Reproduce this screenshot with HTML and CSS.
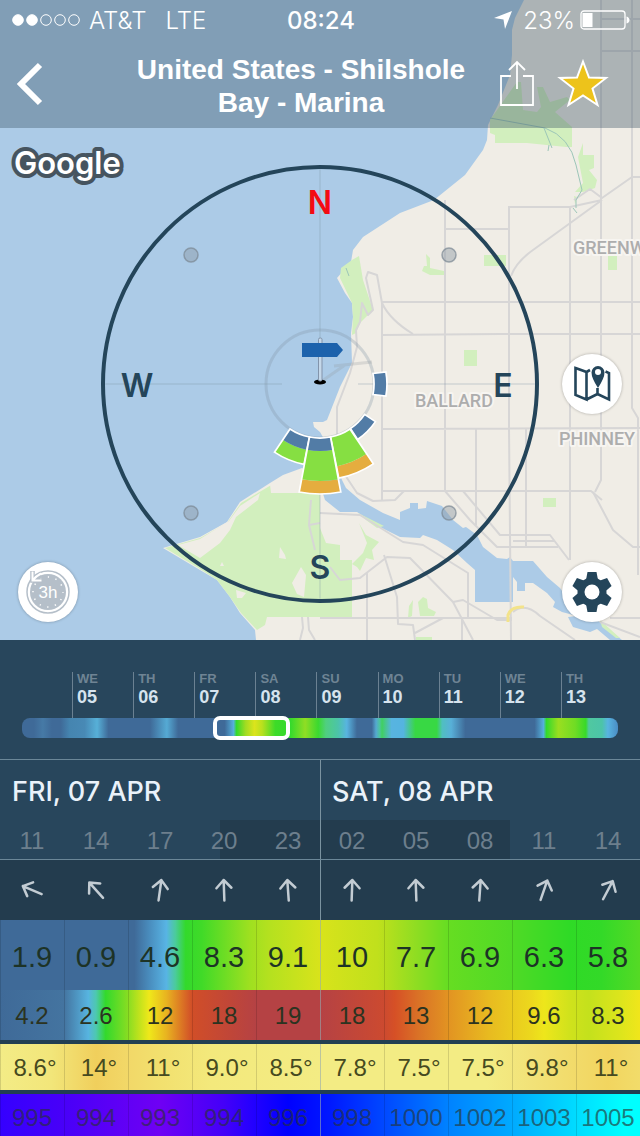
FILE: index.html
```html
<!DOCTYPE html>
<html lang="en">
<head>
<meta charset="utf-8">
<meta name="viewport" content="width=device-width, initial-scale=1">
<title>United States - Shilshole Bay - Marina</title>
<link rel="stylesheet" href="styles.css">
</head>
<body>
<main class="app">
  <section class="map" aria-label="Map">
    <svg class="map-canvas" viewBox="0 0 640 640" preserveAspectRatio="xMidYMid slice">
      <rect class="water" width="640" height="640"/>
      <!-- north shore -->
      <path class="land" d="M524 0L515 18L512 30L512 55L510 75L498 105L488 125L487 140L483 150L465 175L434 200L400 213L363 237L353 250L351 262L337 278L345 293L352 303L353 317L351 333L352 363L340 387L327 420L323 422L313 422L314 427L320 432L333 455L342 480L346 488L360 500L383 513L400 520V512L410 508V503H418V509L426 508L427 501L442 506L453 520L463 528L466 527L477 535L483 547L497 558L507 559L510 557L513 561H533L547 577L560 588L573 607L597 620L622 640H640V0Z"/>
      <!-- south shore -->
      <path class="land" d="M610 640L597 629L590 632L573 627L568 617L577 616L562 612L553 607L555 602L547 593L533 583H525V591H517V582L513 577V602H475V570L467 563L453 550L437 540L423 535L420 538L400 537L380 527L357 512H340L325 500L318 478L302 468L283 475L270 483L240 502L227 522L200 537L163 548L200 570L217 580L230 597L240 613L255 630L256 640Z"/>
      <path class="park" d="M165 548L200 538L227 523L241 503L273 484L271 493H320V528L326 543L340 545V560H352V617H267L265 625L257 630L241 613L230 597L217 580L200 569Z"/>
      <path class="land" d="M178 545L200 539L229 521L240 506L260 493L258 500L236 517L230 530L220 543L200 558ZM270 484L300 470V493H271ZM280 547L285 555L286 559L279 558ZM301 567L306 575L304 597L297 594L292 583ZM236 590L246 593L242 598H237ZM222 562L224 566L220 566Z"/>
      <path class="park" d="M490 120L502 103L517 82H521L523 110L537 112L541 107L537 87H543L550 102L567 97L570 100L555 112L572 127V147H566L527 143H495V135L490 133ZM583 143V155H594V168L589 170L597 180L595 188L583 192H575L583 183L578 157ZM359 256L363 280L373 310L368 315L360 323L356 333L352 335L353 317L352 303L340 278L341 268L352 260ZM484 255H506V266H484ZM426 254L430 258V268L444 271V275H430L422 271L424 266H427ZM608 256H617V270H608ZM464 350H477V366H464ZM543 498H556V507H543ZM358 513L384 526L377 528L366 520ZM359 523L366 535L379 542L372 550L374 560L366 558L360 571L357 567L352 564L363 553L367 543ZM423 597L427 599L428 608L436 612L434 616L420 616L418 602ZM413 600L412 616L408 618L409 606ZM416 637H432V640H416ZM574 196L577 197L575 204ZM600 620L620 638H616L602 627Z"/>
      <g class="roads">
        <path d="M382 303V500M445 200V491M509 207V429L511 640M570 207V560M601 0V480L595 492M632 0V408L638 418V575M476 429V525M526 429V547M600 19H640M601 51H640M508 207H570L602 200M445 229H508M382 302H640M382 335L500 334H640M382 429L640 428M382 491H591L602 500"/>
        <path d="M632 177H640M632 177L602 198L590 189L574 200M602 200L533 250Q516 262 511 276M382 303Q390 320 413 334M382 303L377 275L368 272L366 278L373 310L368 315L362 303L360 322L356 330L357 347L350 373L337 407V440L345 475L357 493L373 501L395 500L404 491M445 491L470 520L497 547H558M463 491L500 535H550L569 560M513 541H555M593 492L613 530L633 547H640"/>
        <path d="M320 513L360 515L403 542L423 545L468 573V618M330 567L340 580L360 578L387 557L410 558L453 602L473 640M367 573V640M384 555L397 597L398 624L413 625L415 640M320 618H512M610 618H640M415 633L443 618H462V640M453 602L463 600L497 620H512M513 612Q525 602 540 616L575 640M311 500L309 525L315 550M309 525L320 523M302 617L303 628L300 640M308 617L309 630L315 640M600 622L640 637"/>
      </g>
      <path class="trail" d="M490 118L545 128Q570 137 576 165L582 190L576 200V208M544 128L552 148M549 145L548 151M346 268L349 276M573 208L577 213"/>
      <path class="highway" d="M508 622V615Q511 606 524 607"/>
      <g class="place">
        <text x="573" y="254">GREENW</text>
        <text x="415" y="407">BALLARD</text>
        <text x="559" y="445">PHINNEY</text>
      </g>

      <g class="crosshair">
        <path d="M320 168V345M320 494V600M104 384H282M358 384H536"/>
        <circle cx="320" cy="384" r="54"/>
      </g>
      <g class="handle">
        <circle cx="191" cy="255" r="7"/><circle cx="449" cy="255" r="7"/>
        <circle cx="191" cy="513" r="7"/><circle cx="449" cy="513" r="7"/>
      </g>
      <circle class="compass-ring" cx="320" cy="384" r="217"/>
      <g class="rose" transform="translate(320 384)">
        <g transform="rotate(-90)">
          <path class="calm" d="M-10.500 53A54 54 0 0 0 10.500 53L12 65.900A67 67 0 0 1 -12 65.900Z"/>
          <path class="edge" d="M-10.500 53A54 54 0 0 0 10.500 53L12 65.900A67 67 0 0 1 -12 65.900Z"/>
        </g>
        <g transform="rotate(-45)">
          <path class="calm" d="M-10 53A54 54 0 0 0 10 53L12.600 65.800A67 67 0 0 1 -12.600 65.800Z"/>
          <path class="edge" d="M-10 53A54 54 0 0 0 10 53L12.600 65.800A67 67 0 0 1 -12.600 65.800Z"/>
        </g>
        <g transform="rotate(-22.5)">
          <path class="strong" d="M-16.400 82.400A84 84 0 0 0 16.400 82.400L18.700 94.200A96 96 0 0 1 -18.700 94.200Z"/>
          <path class="fresh" d="M-10.500 53A54 54 0 0 0 10.500 53L16.400 82.400A84 84 0 0 1 -16.400 82.400Z"/>
          <path class="edge" d="M-10.500 53A54 54 0 0 0 10.500 53L18.700 94.200A96 96 0 0 1 -18.700 94.200Z"/>
        </g>
        <g transform="rotate(22.5)">
          <path class="fresh" d="M-13.100 65.700A67 67 0 0 0 13.100 65.700L16 80.400A82 82 0 0 1 -16 80.400Z"/>
          <path class="calm" d="M-10.500 53A54 54 0 0 0 10.500 53L13.100 65.700A67 67 0 0 1 -13.100 65.700Z"/>
          <path class="edge" d="M-10.500 53A54 54 0 0 0 10.500 53L16 80.400A82 82 0 0 1 -16 80.400Z"/>
        </g>
        <g>
          <path class="strong" d="M-18.500 95.200A97 97 0 0 0 18.500 95.200L20.800 108A110 110 0 0 1 -20.800 108Z"/>
          <path class="fresh" d="M-13.100 65.700A67 67 0 0 0 13.100 65.700L18.500 95.200A97 97 0 0 1 -18.500 95.200Z"/>
          <path class="calm" d="M-10.500 53A54 54 0 0 0 10.500 53L13.100 65.700A67 67 0 0 1 -13.100 65.700Z"/>
          <path class="edge" d="M-10.500 53A54 54 0 0 0 10.500 53L20.800 108A110 110 0 0 1 -20.800 108Z"/>
        </g>
      </g>
      <path class="sign-shadow" d="M322 381L345 365M334 366L372 362"/>
      <ellipse cx="320" cy="382" rx="6" ry="2.500"/>
      <rect class="pole" x="318.500" y="338" width="3.500" height="43" rx="1.500"/>
      <path class="sign" d="M302 343H337L343 350L337 357H302Z"/>
      <g class="bearing">
        <text class="north" x="320" y="214">N</text>
        <text x="137" y="397">W</text>
        <text x="503" y="397">E</text>
        <text x="320" y="579">S</text>
      </g>
      <text class="google" x="14" y="174">Google</text>
    </svg>

    <header class="topbar">
      <div class="status">
        <div class="status-left">
          <svg class="signal" viewBox="0 0 70 14"><g fill="#fff" stroke="#fff"><circle cx="6" cy="7" r="5.300"/><circle cx="20" cy="7" r="5.300"/><g fill="none"><circle cx="34" cy="7" r="5.300"/><circle cx="48" cy="7" r="5.300"/><circle cx="62" cy="7" r="5.300"/></g></g></svg>
          <span>AT&amp;T</span><span class="network">LTE</span>
        </div>
        <time class="clock">08:24</time>
        <div class="status-right">
          <svg class="locate" viewBox="0 0 20 20"><path fill="#fff" d="M19 1L12 19L10.500 9.500L1 8Z"/></svg>
          <span>23%</span>
          <svg class="battery" viewBox="0 0 50 20"><rect x="1" y="1" width="44" height="18" rx="3" fill="none" stroke="#fff" stroke-width="1.300"/><rect x="2.500" y="3" width="10" height="14" fill="#fff"/><path d="M46.500 6.500Q49.500 7.500 49.500 10T46.500 13.500Z" fill="#fff"/></svg>
        </div>
      </div>
      <div class="nav">
        <button class="icon-button" aria-label="Back"><svg class="back" viewBox="0 0 30 44"><path d="M26 3L7 22L26 41" fill="none" stroke="#fff" stroke-width="6"/></svg></button>
        <h1 class="title">United States - Shilshole<br>Bay - Marina</h1>
        <button class="icon-button" aria-label="Share"><svg class="share" viewBox="0 0 34 48"><path d="M11 16H1V45H33V16H23M17 29V2M9 10L17 2L25 10" fill="none" stroke="#fff" stroke-width="1.800"/></svg></button>
        <button class="icon-button" aria-label="Favourite"><svg class="star" viewBox="0 0 52 52"><path d="M26 3.500L32 19.500L49 20L35.500 30.500L40.500 47L26 37.500L11.500 47L16.500 30.500L3 20L20 19.500Z" fill="#edc31b" stroke="#fff" stroke-width="2"/></svg></button>
      </div>
    </header>

    <button class="round round-map" aria-label="Map type">
      <svg viewBox="0 0 60 60"><g fill="none" stroke="#24455a" stroke-width="2.600"><path d="M13.500 14L24.500 18V45.500L13.500 41ZM24.500 18L28 16M24.500 45.500L35.500 40L47 45.500V19L43.500 17.500M24.500 18V45M35.500 34V40"/></g><path fill="#24455a" fill-rule="evenodd" d="M36 34Q29.500 24 29.500 18.500A6.500 6.500 0 0 1 42.500 18.500Q42.500 24 36 34ZM36 15A3 3 0 1 0 36 21A3 3 0 1 0 36 15Z"/></svg>
    </button>
    <button class="round round-settings" aria-label="Settings">
      <svg viewBox="0 0 60 60"><g fill="#24455a"><circle cx="30" cy="30" r="14.500"/><path id="tooth" d="M25.500 10H34.500L36 18V42L34.500 50H25.500L24 42V18Z"/><use href="#tooth" transform="rotate(60 30 30)"/><use href="#tooth" transform="rotate(120 30 30)"/></g><circle cx="30" cy="30" r="7.500" fill="#fff"/></svg>
    </button>
    <button class="round round-time" aria-label="3 hour interval">
      <svg viewBox="0 0 60 60"><circle cx="30" cy="30" r="21" fill="none" stroke="#b5bfc9" stroke-width="1.500"/><circle cx="30" cy="30" r="18" fill="#b5bfc9"/><circle cx="30" cy="30" r="15" fill="none" stroke="#fff" stroke-width="1.500" stroke-dasharray="1.300 6.550" stroke-dashoffset=".6"/><path d="M14.500 9V18.500H24M14.500 18.500L22 12.500" fill="none" stroke="#b5bfc9" stroke-width="4.500"/><path d="M14.500 9.500V18.500H23.500M14.500 18.500Q18 14 23 11.500" fill="none" stroke="#fff" stroke-width="2"/><text x="30" y="36" class="interval">3h</text></svg>
    </button>
  </section>

  <section class="timeline" aria-label="Forecast days">
    <div class="days">
      <span></span>
      <div class="day"><span>WE</span><b>05</b></div>
      <div class="day"><span>TH</span><b>06</b></div>
      <div class="day"><span>FR</span><b>07</b></div>
      <div class="day"><span>SA</span><b>08</b></div>
      <div class="day"><span>SU</span><b>09</b></div>
      <div class="day"><span>MO</span><b>10</b></div>
      <div class="day"><span>TU</span><b>11</b></div>
      <div class="day"><span>WE</span><b>12</b></div>
      <div class="day"><span>TH</span><b>13</b></div>
    </div>
    <div class="strip"><div class="window"></div></div>
  </section>

  <table class="forecast">
    <thead>
      <tr class="dates"><th colspan="5" scope="colgroup">FRI, 07 APR</th><th class="new-day" colspan="5" scope="colgroup">SAT, 08 APR</th></tr>
      <tr class="hours"><th scope="col">11</th><th scope="col">14</th><th scope="col">17</th><th scope="col">20</th><th scope="col">23</th><th scope="col" class="new-day">02</th><th scope="col">05</th><th scope="col">08</th><th scope="col">11</th><th scope="col">14</th></tr>
    </thead>
    <tbody>
      <tr class="arrows">
        <td><svg viewBox="0 0 24 24"><path d="M12 22.500V2M4.500 10L12 2L19.500 10" transform="rotate(-67 12 12)"/></svg></td>
        <td><svg viewBox="0 0 24 24"><path d="M12 22.500V2M4.500 10L12 2L19.500 10" transform="rotate(-42 12 12)"/></svg></td>
        <td><svg viewBox="0 0 24 24"><path d="M12 22.500V2M4.500 10L12 2L19.500 10" transform="rotate(8 12 12)"/></svg></td>
        <td><svg viewBox="0 0 24 24"><path d="M12 22.500V2M4.500 10L12 2L19.500 10" transform="rotate(-2 12 12)"/></svg></td>
        <td><svg viewBox="0 0 24 24"><path d="M12 22.500V2M4.500 10L12 2L19.500 10" transform="rotate(-4 12 12)"/></svg></td>
        <td class="new-day"><svg viewBox="0 0 24 24"><path d="M12 22.500V2M4.500 10L12 2L19.500 10" transform="rotate(2 12 12)"/></svg></td>
        <td><svg viewBox="0 0 24 24"><path d="M12 22.500V2M4.500 10L12 2L19.500 10" transform="rotate(-2 12 12)"/></svg></td>
        <td><svg viewBox="0 0 24 24"><path d="M12 22.500V2M4.500 10L12 2L19.500 10" transform="rotate(4 12 12)"/></svg></td>
        <td><svg viewBox="0 0 24 24"><path d="M12 22.500V2M4.500 10L12 2L19.500 10" transform="rotate(19 12 12)"/></svg></td>
        <td><svg viewBox="0 0 24 24"><path d="M12 22.500V2M4.500 10L12 2L19.500 10" transform="rotate(28 12 12)"/></svg></td>
      </tr>
      <tr class="wind"><td>1.9</td><td>0.9</td><td>4.6</td><td>8.3</td><td>9.1</td><td class="new-day">10</td><td>7.7</td><td>6.9</td><td>6.3</td><td>5.8</td></tr>
      <tr class="gusts"><td>4.2</td><td>2.6</td><td>12</td><td>18</td><td>19</td><td class="new-day">18</td><td>13</td><td>12</td><td>9.6</td><td>8.3</td></tr>
      <tr class="temperature"><td>8.6°</td><td>14°</td><td>11°</td><td>9.0°</td><td>8.5°</td><td class="new-day">7.8°</td><td>7.5°</td><td>7.5°</td><td>9.8°</td><td>11°</td></tr>
      <tr class="pressure"><td>995</td><td>994</td><td>993</td><td>994</td><td>996</td><td class="new-day">998</td><td>1000</td><td>1002</td><td>1003</td><td>1005</td></tr>
    </tbody>
  </table>
</main>
</body>
</html>
```
FILE: styles.css
```css
* { box-sizing: border-box; }
body {
  margin: 0;
  background: #28465c;
  font-family: "Liberation Sans", Arial, sans-serif;
}
button { border: 0; padding: 0; background: none; cursor: pointer; }
svg { display: block; }

/* Map */
.map { position: relative; aspect-ratio: 1; overflow: hidden; }
.map-canvas { width: 100%; height: 100%; }
.water { fill: #accbe7; }
.land { fill: #f0ede6; }
.park { fill: #d2efbe; }
.roads { fill: none; stroke: #d7d6d6; stroke-width: 2; stroke-linejoin: round; }
.trail { fill: none; stroke: #9cc6b8; stroke-width: 1; }
.highway { fill: none; stroke: #f3e38a; stroke-width: 3; }
.place {
  font: 500 18px Roboto, sans-serif;
  fill: #adadad;
  stroke: #f7f5f1;
  stroke-width: 4;
  stroke-linejoin: round;
  paint-order: stroke;
}
.crosshair { fill: none; stroke: #8096a5; stroke-opacity: .4; }
.crosshair circle { stroke-width: 3; stroke-opacity: .3; }
.handle { fill: #8c99a5; fill-opacity: .45; stroke: #7b8893; stroke-opacity: .7; stroke-width: 1.5; }
.compass-ring { fill: none; stroke: #24455a; stroke-width: 4; }
.calm { fill: #527ca6; }
.fresh { fill: #86df42; }
.strong { fill: #e5ad3f; }
.edge { fill: none; stroke: #fff; stroke-width: 1.7; }
.pole { fill: #c5d8ea; stroke: #8294ab; }
.sign { fill: #1c62ac; }
.sign-shadow { fill: none; stroke: #8f989b; stroke-opacity: .25; stroke-width: 3; }
.bearing { font: 600 32px Inter, sans-serif; fill: #24455a; text-anchor: middle; }
.bearing .north { fill: #f40b12; }
.google {
  font: 600 31px Inter, sans-serif;
  fill: #fff;
  stroke: #46545f;
  stroke-width: 8;
  stroke-linejoin: round;
  paint-order: stroke;
}

/* Header over the map */
.topbar {
  position: absolute;
  inset: 0 0 auto;
  color: #fff;
  background: rgba(58, 81, 98, .37);
}
.status {
  display: grid;
  grid-template-columns: 1fr auto 1fr;
  align-items: center;
  height: 40px;
  padding: 0 10px 0 12px;
  font: 300 24px Inter, sans-serif;
}
.status-left, .status-right { display: flex; align-items: center; }
.status-left { gap: 7px; }
.status-right { justify-content: flex-end; gap: 5px; }
.network { margin-left: 12px; }
.clock { font-weight: 500; }
.signal { width: 70px; height: 14px; }
.locate { width: 20px; height: 20px; margin-right: 5px; }
.battery { width: 50px; height: 20px; }
.nav {
  display: grid;
  grid-template-columns: 102px 1fr 34px 98px;
  align-items: center;
  height: 88px;
  padding-right: 8px;
}
.icon-button { display: flex; justify-content: center; }
.icon-button:first-child { justify-content: flex-start; padding-left: 14px; }
.back { width: 30px; height: 44px; }
.share { width: 34px; height: 48px; }
.star { width: 52px; height: 52px; }
.title { margin: 0; padding-top: 4px; font-size: 28px; line-height: 33px; text-align: center; }

/* Floating buttons */
.round {
  position: absolute;
  width: 60px;
  height: 60px;
  border-radius: 50%;
  background: #fff;
  box-shadow: 0 0 3px rgba(0, 0, 0, .3);
}
.round-map { right: 18px; top: calc(60% - 30px); }
.round-settings { right: 18px; bottom: 18px; }
.round-time { left: 18px; bottom: 18px; }
.interval { font: 17px "Liberation Sans", sans-serif; fill: #fff; text-anchor: middle; }

/* Day overview */
.timeline { padding: 32px 22px 21px; }
.days { display: grid; grid-template-columns: 50fr repeat(8, 61fr) 57fr; height: 46px; }
.day {
  display: flex;
  flex-direction: column;
  padding-left: 4px;
  border-left: 1px solid #6b8192;
  color: #6f8494;
  font-size: 13px;
  font-weight: bold;
  line-height: 14px;
}
.day b { color: #d6e3ee; font-size: 18px; line-height: 22px; }
.strip {
  position: relative;
  height: 20px;
  border-radius: 8px;
  background: linear-gradient(90deg,
    #3f6a98 2%, #467aa6 3.5%, #3f6a98 5%, #3f6a98 6.5%, #4585b0 8%, #4889b5 10.5%,
    #57b0d8 12.6%, #3f6a98 14.5%, #3f6a98 21.5%, #55aad4 24.3%, #3f6a98 26.2%,
    #3f6a98 34%, #56b0dc 35.5%, #33d92c 36%, #a0dc22 37.5%, #dce41c 39%, #b8e01e 40.3%,
    #3ddb28 42.5%, #33d92c 45%, #90dd24 47.5%, #3bd92f 49.7%, #50cf80 51%, #4cc4a8 53%,
    #58b4e0 54.5%, #3f6a98 56.2%, #3f6a98 58.7%, #55a8d0 59.4%, #4cc4a0 60%, #40d060 60.4%,
    #58b4e0 62%, #55b4e0 64%, #38d844 66%, #38d844 69.6%, #50bfc0 70.5%, #58b0d8 72%,
    #3f6a98 74.4%, #3f6a98 86%, #55b0dc 87.5%, #33d92c 88%, #9ade20 90%, #70dc24 92.8%,
    #38d92a 94.6%, #50c8a0 95.1%, #4cc4a8 97.3%, #58b4e0 98.3%, #4a8cc4);
}
.window {
  position: absolute;
  top: -2px;
  bottom: -2px;
  left: 32%;
  width: 13%;
  border: 4px solid #fff;
  border-radius: 7px;
}

/* Hourly forecast */
.forecast {
  width: 100%;
  table-layout: fixed;
  border-spacing: 0;
  border-top: 1px solid #6b8798;
  font-size: 24px;
  text-align: center;
}
.forecast th, .forecast td { padding: 0; font-weight: normal; }
.dates { height: 60px; }
.forecast .dates th { padding: 2px 0 0 12px; font: 500 27px Inter, sans-serif; text-align: left; color: #eaf2fa; }
.hours { height: 40px; color: #6d7f8d; background: linear-gradient(90deg, transparent 34.4%, #233c4e 34.4%, #233c4e 79.7%, transparent 79.7%); }
.forecast .hours th { padding-top: 2px; border-bottom: 1px solid #6b8798; }
.arrows { height: 60px; background: #233c4e; }
.arrows svg { width: 24px; height: 24px; margin: 0 auto; fill: none; stroke: #c3ccd3; stroke-width: 2.5; stroke-linecap: round; stroke-linejoin: round; }
.wind td, .gusts td, .temperature td, .pressure td { box-shadow: inset 1px 0 rgba(0, 0, 0, .13); }
.forecast .new-day { box-shadow: inset 1px 0 #7b93a0; }
.wind .new-day, .gusts .new-day, .temperature .new-day, .pressure .new-day { box-shadow: inset 1px 0 rgba(150, 170, 175, .6); }
.wind {
  height: 70px;
  font-size: 29px;
  color: #1d3326;
  background: linear-gradient(90deg,
    #3f6a98 21%, #4a8fc0 23.5%, #58b4e4 26%, #4bcb9c 27.4%, #33d92c 29%, #40da28 31.5%,
    #9ee020 39%, #b4e11f 42%, #d8e31b 50%, #c0e01c 59%, #8fdd22 65%, #66dd22 70%,
    #50da26 80%, #2fda26 89%, #33d928 94%, #55da25);
}
.forecast .wind td { padding-top: 4px; }
.gusts {
  height: 50px;
  color: #2b3320;
  background: linear-gradient(90deg,
    #3f6a98, #4474a0 10%, #57b4e0 13.8%, #4dc8b0 15%, #33d92c 16.5%, #88dd22 20%,
    #c8e31c 22%, #efe81a 23.3%, #e8b320 26%, #dc7824 28.3%, #d14e28 30%, #c04638 36%,
    #b54244 40%, #b54244 50%, #cc4a30 60%, #d65026 61.7%, #da7426 65.6%, #e29322 70%,
    #e8bb20 76.5%, #ecd81d 83%, #eee61b 85%, #d0e21c 89%, #c4e11c 92%, #dde51c 97%, #f0e61b);
}
.forecast .gusts td { padding-top: 2px; }
.temperature {
  height: 54px;
  color: #464a20;
  background: linear-gradient(90deg,
    #f3ec86, #f2e67a 8%, #f0cf5c 15%, #f2d868 20%, #f2e06e 25%, #f3e97c 33%,
    #f3ec84 50%, #f3ec84 76%, #f2e278 83%, #f2d55f 95%, #f2dc6a);
}
.forecast .temperature td { padding: 2px 0 0 6px; border-top: 4px solid #223f52; border-bottom: 4px solid #223f52; }
.pressure {
  height: 42px;
  color: rgba(40, 50, 50, .65);
  background: linear-gradient(90deg,
    #3500ff, #4800f8 10%, #6f00f4 25%, #4400f8 35%, #2000ff 40%, #00f 45%, #0018ff 51.5%,
    #0048ff 60%, #0082ff 70%, #0af 80%, #00dcff 90%, #0ff 97.6%);
}
.forecast .pressure td { padding-top: 6px; }
```
